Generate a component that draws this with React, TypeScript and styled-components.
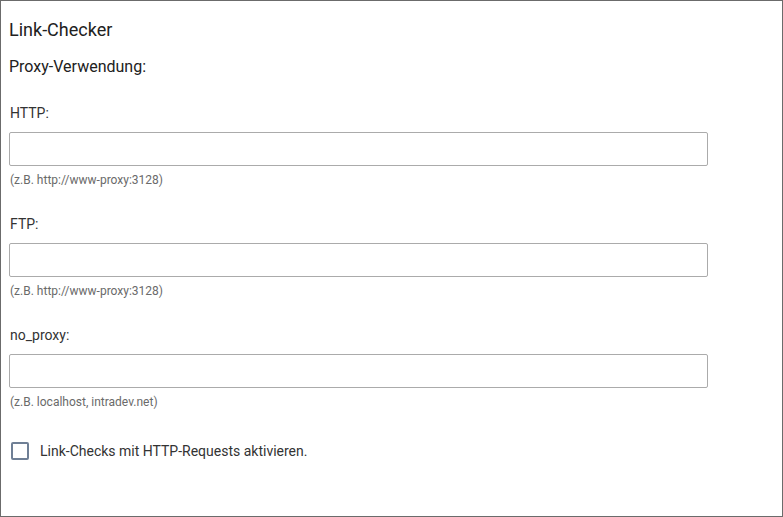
import React from "react";
import styled, { createGlobalStyle } from "styled-components";

const Global = createGlobalStyle`
  html, body { margin: 0; padding: 0; background: #fff; }
  body { font-family: Roboto, "Noto Sans", Arial, sans-serif; }
  * { box-sizing: border-box; }
`;

const Panel = styled.div`
  width: 783px;
  height: 517px;
  border: 1px solid #6b6b6b;
  padding: 17px 8px 0 8px;
  display: flex;
  flex-direction: column;
  color: #222;
`;

const Title = styled.h2`
  margin: 0;
  font-size: 18px;
  font-weight: 400;
  line-height: 24px;
  color: #212121;
`;

const Subtitle = styled.h3`
  margin: 14px 0 0 0;
  font-size: 16px;
  font-weight: 400;
  line-height: 22px;
  color: #212121;
`;

const Fields = styled.div`
  display: flex;
  flex-direction: column;
  gap: 26px;
  margin-top: 25px;
`;

const Field = styled.div`
  display: flex;
  flex-direction: column;
`;

const Label = styled.label`
  font-size: 14px;
  line-height: 20px;
  padding-left: 1px;
  color: #333;
`;

const Input = styled.input`
  margin-top: 9px;
  width: 699px;
  height: 34px;
  border: 1px solid #ababab;
  border-radius: 2px;
  padding: 0 8px;
  font: inherit;
  font-size: 14px;
  outline: none;
`;

const Hint = styled.div`
  margin-top: 6px;
  font-size: 12px;
  line-height: 16px;
  padding-left: 1px;
  color: #6a6a6a;
`;

const CheckRow = styled.label`
  margin-top: 31px;
  display: flex;
  align-items: center;
  gap: 11px;
  padding-left: 2px;
  font-size: 14px;
  line-height: 20px;
  color: #333;
`;

const Box = styled.span`
  width: 18px;
  height: 18px;
  border: 2px solid #6f7f95;
  border-radius: 2px;
  background: #fff;
  flex: none;
`;

const fields = [
  { label: "HTTP:", hint: "(z.B. http://www-proxy:3128)" },
  { label: "FTP:", hint: "(z.B. http://www-proxy:3128)" },
  { label: "no_proxy:", hint: "(z.B. localhost, intradev.net)" },
];

export default function App() {
  return (
    <>
      <Global />
      <Panel>
        <Title>Link-Checker</Title>
        <Subtitle>Proxy-Verwendung:</Subtitle>
        <Fields>
          {fields.map((f) => (
            <Field key={f.label}>
              <Label>{f.label}</Label>
              <Input type="text" />
              <Hint>{f.hint}</Hint>
            </Field>
          ))}
        </Fields>
        <CheckRow>
          <Box />
          Link-Checks mit HTTP-Requests aktivieren.
        </CheckRow>
      </Panel>
    </>
  );
}
